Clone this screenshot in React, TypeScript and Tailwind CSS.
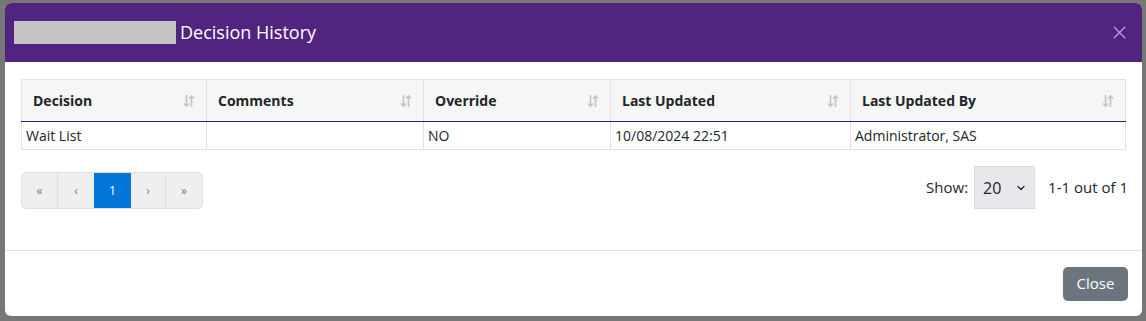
import { X, ChevronDown } from "lucide-react";

const columns = [
  { key: "decision", label: "Decision", width: "w-[185px]" },
  { key: "comments", label: "Comments", width: "w-[217px]" },
  { key: "override", label: "Override", width: "w-[187px]" },
  { key: "updated", label: "Last Updated", width: "w-[240px]" },
  { key: "by", label: "Last Updated By", width: "" },
];

const rows = [
  {
    decision: "Wait List",
    comments: "",
    override: "NO",
    updated: "10/08/2024 22:51",
    by: "Administrator, SAS",
  },
];

function SortIcon() {
  return (
    <svg width="12" height="14" viewBox="0 0 12 14" className="text-[#c4c4c4]" aria-hidden="true">
      <path d="M3.5 1v11M1 9.5l2.5 2.5L6 9.5" stroke="currentColor" strokeWidth="1.6" fill="none" />
      <path d="M8.5 13V2M6 4.5L8.5 2 11 4.5" stroke="currentColor" strokeWidth="1.6" fill="none" />
    </svg>
  );
}

export default function App() {
  return (
    <div
      className="h-[321px] w-[1146px] bg-[#777777] pl-[5px] pr-[4px] pt-[3px] pb-[5px]"
      style={{ fontFamily: '"Open Sans", "Liberation Sans", sans-serif' }}
    >
      <div className="flex h-full flex-col overflow-hidden rounded-[6px] bg-white">
        {/* header */}
        <div className="flex h-[59px] shrink-0 items-center bg-[#512480] pl-[9px] pr-[12px]">
          <div className="h-[23px] w-[162px] bg-[#c4c4c4]" />
          <h2 className="ml-[4px] text-[18px] text-white">Decision History</h2>
          <button type="button" className="ml-auto text-[#b9a5cf]" aria-label="Close">
            <X className="h-[21px] w-[21px]" strokeWidth={1.4} />
          </button>
        </div>

        {/* body */}
        <div className="px-[16px] pt-[17px]">
          <table className="w-full border-collapse text-[14px] text-[#212529]">
            <thead>
              <tr className="bg-[#f6f6f6]">
                {columns.map((c) => (
                  <th
                    key={c.key}
                    className={`${c.width} h-[42px] border border-[#e2e2e2] border-b-[#3b1a5e] px-[11px] text-left font-bold`}
                  >
                    <div className="flex items-center justify-between">
                      <span>{c.label}</span>
                      <SortIcon />
                    </div>
                  </th>
                ))}
              </tr>
            </thead>
            <tbody>
              {rows.map((r, i) => (
                <tr key={i}>
                  {columns.map((c) => (
                    <td key={c.key} className="h-[28px] border border-[#e2e2e2] px-[4px]">
                      {r[c.key as keyof typeof r]}
                    </td>
                  ))}
                </tr>
              ))}
            </tbody>
          </table>

          <div className="mt-[16px] flex items-center justify-between">
            <div className="mt-[6px] flex h-[37px] overflow-hidden rounded-[5px] border border-[#dedede] bg-[#efefef] text-[12px] text-[#7a7a7a]">
              <span className="flex w-[36px] items-center justify-center border-r border-[#dedede]">«</span>
              <span className="flex w-[36px] items-center justify-center">‹</span>
              <span className="flex w-[37px] items-center justify-center bg-[#0275d8] text-[13px] text-white">1</span>
              <span className="flex w-[35px] items-center justify-center border-r border-[#dedede]">›</span>
              <span className="flex w-[36px] items-center justify-center">»</span>
            </div>
            <div className="flex items-center text-[15px] text-[#212529]">
              <span>Show:</span>
              <div className="ml-[6px] flex h-[43px] w-[61px] items-center justify-between border border-[#dcdcdc] bg-[#e8e8ec] pl-[8px] pr-[7px] text-[16px]">
                <span>20</span>
                <ChevronDown className="h-[12px] w-[12px]" strokeWidth={2.5} />
              </div>
              <span className="ml-[13px] mr-[-2px]">1-1 out of 1</span>
            </div>
          </div>
        </div>

        {/* footer */}
        <div className="mt-auto flex h-[66px] items-center justify-end border-t border-[#e2e2e2] px-[14px]">
          <button
            type="button"
            className="h-[34px] w-[65px] rounded-[5px] bg-[#6c757d] text-[15px] text-white"
          >
            Close
          </button>
        </div>
      </div>
    </div>
  );
}
